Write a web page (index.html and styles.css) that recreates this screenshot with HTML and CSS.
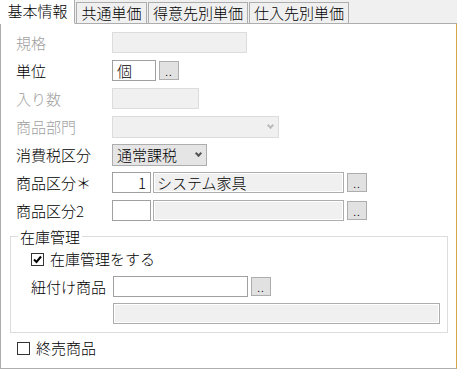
FILE: index.html
```html
<!DOCTYPE html>
<html lang="ja">
<head>
  <meta charset="UTF-8">
  <title>商品マスタ</title>
  <link rel="stylesheet" href="styles.css">
</head>
<body>
  <div class="tabs">
    <div class="tab active w4">基本情報</div>
    <div class="tab w4">共通単価</div>
    <div class="tab w6">得意先別単価</div>
    <div class="tab w6">仕入先別単価</div>
  </div>

  <div class="panel">
    <div class="row">
      <span class="label disabled">規格</span>
      <span class="box off w-spec"></span>
    </div>
    <div class="row">
      <span class="label">単位</span>
      <span class="box w-unit">個</span>
      <span class="btn">..</span>
    </div>
    <div class="row">
      <span class="label disabled">入り数</span>
      <span class="box off w-qty"></span>
    </div>
    <div class="row">
      <span class="label disabled">商品部門</span>
      <span class="select off w-dept"><span></span><i class="chev"></i></span>
    </div>
    <div class="row">
      <span class="label">消費税区分</span>
      <span class="select w-tax"><span>通常課税</span><i class="chev"></i></span>
    </div>
    <div class="row">
      <span class="label">商品区分＊</span>
      <span class="box num w-code">1</span>
      <span class="box ro w-name">システム家具</span>
      <span class="btn">..</span>
    </div>
    <div class="row">
      <span class="label">商品区分2</span>
      <span class="box num w-code"></span>
      <span class="box ro w-name"></span>
      <span class="btn">..</span>
    </div>

    <fieldset class="group">
      <legend>在庫管理</legend>
      <label class="check">
        <span class="tick"><svg width="9" height="9" viewBox="0 0 9 9"><path d="M1 4.5 L3.5 7 L8 1.5" fill="none" stroke="#000" stroke-width="2"/></svg></span>
        在庫管理をする
      </label>
      <div class="row sub">
        <span class="label short">紐付け商品</span>
        <span class="box w-link"></span>
        <span class="btn">..</span>
      </div>
      <div class="row sub">
        <span class="label short"></span>
        <span class="box ro w-linkname"></span>
      </div>
    </fieldset>

    <label class="check end">
      <span class="tick"></span>
      終売商品
    </label>
  </div>
</body>
</html>
```

FILE: styles.css
```css
* {
  box-sizing: border-box;
}
body {
  margin: 0;
  width: 457px;
  height: 369px;
  background: #f0f0f0;
  font-family: "Noto Sans CJK JP", "Noto Sans", sans-serif;
  font-weight: 300;
  font-size: 15px;
  color: #000;
  overflow: hidden;
}
.tabs {
  display: flex;
  align-items: flex-end;
  height: 24px;
  border-bottom: 1px solid #adadad;
}
.tab {
  height: 22px;
  line-height: 19px;
  margin-bottom: -1px;
  margin-right: 1px;
  background: #f0f0f0;
  border: 1px solid #adadad;
  text-align: center;
  white-space: nowrap;
  overflow: hidden;
}
.tab.w4 { width: 71px; }
.tab.w6 { width: 100px; }
.tab.active {
  width: 75px;
  height: 25px;
  line-height: 22px;
  background: #fff;
  border-color: #fff #adadad #fff #fff;
}
.panel {
  height: 345px;
  background: #fff;
  border-left: 1px solid #adadad;
  border-right: 1px solid #d4a848;
  border-bottom: 1px solid #adadad;
  padding: 8px 0 0 15px;
}
.row {
  display: flex;
  align-items: center;
  height: 21px;
  margin-bottom: 7px;
}
.label {
  width: 96px;
  line-height: 21px;
  white-space: nowrap;
}
.label.disabled {
  color: #a0a0a0;
}
.label.short {
  width: 82px;
}
.box {
  height: 21px;
  line-height: 19px;
  padding: 0 4px;
  background: #fff;
  border: 1px solid #a0a0a0;
  white-space: nowrap;
  overflow: hidden;
}
.box.off {
  background: #f0f0f0;
  border-color: #dcdcdc;
}
.box.ro {
  background: #f0f0f0;
  border: 1px solid #adadad;
  box-shadow: inset 0 0 0 1px #fff;
  padding-left: 3px;
}
.box.num {
  text-align: right;
}
.w-spec { width: 135px; }
.w-unit { width: 44px; }
.w-qty { width: 87px; }
.w-code { width: 39px; margin-right: 2px; }
.w-name { width: 191px; }
.w-link { width: 135px; }
.w-linkname { width: 327px; }
.btn {
  width: 20px;
  height: 19px;
  margin-left: 3px;
  background: #e1e1e1;
  border: 1px solid #adadad;
  font-size: 11px;
  line-height: 18px;
  text-align: center;
  letter-spacing: 1px;
}
.select {
  display: flex;
  align-items: center;
  justify-content: space-between;
  height: 22px;
  padding: 0 5px 0 4px;
  background: #e5e5e5;
  border: 1px solid #adadad;
  line-height: 20px;
}
.select.off {
  background: #f0f0f0;
  border-color: #dcdcdc;
}
.w-dept { width: 167px; }
.w-tax { width: 95px; }
.chev {
  width: 5px;
  height: 5px;
  margin-top: -3px;
  border-right: 2px solid #555;
  border-bottom: 2px solid #555;
  transform: rotate(45deg);
}
.select.off .chev {
  border-color: #bbb;
}
.group {
  width: 438px;
  height: 105px;
  margin: 6px 0 0 -6px;
  padding: 0 0 0 20px;
  border: 1px solid #dcdcdc;
}
.group legend {
  padding: 0 2px;
  margin-left: -13px;
  line-height: 17px;
}
.check {
  display: flex;
  align-items: center;
  height: 18px;
  margin: 5px 0 8px;
  line-height: 18px;
}
.tick {
  display: flex;
  align-items: center;
  justify-content: center;
  width: 13px;
  height: 13px;
  margin-right: 6px;
  border: 1px solid #333;
  background: #fff;
}
.row.sub {
  margin-bottom: 6px;
}
.check.end {
  margin: 6px 0 0 1px;
}
```
